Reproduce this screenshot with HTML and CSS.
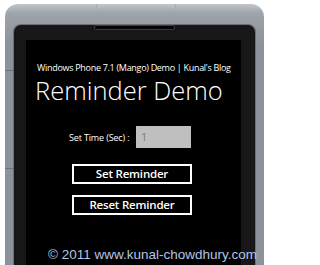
FILE: index.html
```html
<!DOCTYPE html>
<html>
<head>
<meta charset="utf-8">
<link rel="stylesheet" href="styles.css">
</head>
<body>
<div class="phone">
  <div class="bezel">
    <div class="speaker"></div>
    <div class="screen">
      <div class="subtitle">Windows Phone 7.1 (Mango) Demo | Kunal's Blog</div>
      <div class="title">Reminder Demo</div>
      <div class="row">
        <span class="label">Set Time (Sec) :</span>
        <span class="textbox">1</span>
      </div>
      <div class="buttons">
        <div class="btn">Set Reminder</div>
        <div class="btn">Reset Reminder</div>
      </div>
    </div>
  </div>
</div>
<div class="watermark">© 2011 www.kunal-chowdhury.com</div>
</body>
</html>
```
FILE: styles.css
```css
html, body {
  margin: 0;
  padding: 0;
  background: #ffffff;
  overflow: hidden;
  width: 270px;
  height: 265px;
}
body {
  position: relative;
  font-family: "Open Sans", "Noto Sans", sans-serif;
}
.phone {
  margin: 4px 0 0 5px;
  width: 259px;
  height: 261px;
  box-sizing: border-box;
  padding: 8px 9px 0 9px;
  border-radius: 13px 13px 0 0;
  background:
    linear-gradient(#6c737a, #6c737a) no-repeat 0 66px / 9px 1px,
    linear-gradient(#6c737a, #6c737a) no-repeat 0 164px / 9px 1px,
    linear-gradient(#a9aeb3, #a9aeb3) no-repeat 91px 0 / 1px 8px,
    linear-gradient(#a9aeb3, #a9aeb3) no-repeat 170px 0 / 1px 8px,
    linear-gradient(to bottom, #c2c6ca 0px, #9ea4aa 9px, #8b9299 40px, #8b9299 100%);
  overflow: hidden;
}
.bezel {
  height: 100%;
  box-sizing: border-box;
  padding: 0 14px 0 12px;
  background: #171717;
  border-radius: 7px 7px 0 0;
  box-shadow: 0 0 0 1px #6c7075;
}
.speaker {
  margin: 13px auto 0;
  position: relative;
  left: 1px;
  width: 79px;
  height: 3px;
  border-radius: 2px;
  background: #050505;
  border: 1px solid #3a3a3a;
  margin-bottom: 10px;
}
.screen {
  background: #000000;
  height: 225px;
  padding-top: 22px;
  box-sizing: border-box;
  color: #ffffff;
  overflow: hidden;
}
.subtitle {
  font-size: 9px;
  letter-spacing: -0.3px;
  line-height: 12px;
  padding-left: 11px;
  white-space: nowrap;
}
.title {
  font-size: 25.5px;
  font-weight: 300;
  line-height: 30px;
  margin-top: 1px;
  padding-left: 9px;
  white-space: nowrap;
}
.row {
  display: flex;
  align-items: center;
  margin-top: 21px;
  padding-left: 43px;
}
.label {
  font-size: 9px;
  letter-spacing: -0.15px;
  width: 67px;
  white-space: nowrap;
}
.textbox {
  width: 55px;
  height: 22px;
  box-sizing: border-box;
  background: #bfbfbf;
  color: #7a7a7a;
  font-size: 11px;
  line-height: 22px;
  padding-left: 5px;
}
.buttons {
  display: flex;
  flex-direction: column;
  gap: 11px;
  margin-top: 16px;
  padding-left: 46px;
}
.btn {
  width: 120px;
  height: 20px;
  box-sizing: border-box;
  border: 2px solid #ffffff;
  text-align: center;
  font-size: 11.5px;
  font-weight: 600;
  letter-spacing: -0.2px;
  line-height: 16px;
}
.watermark {
  position: absolute;
  left: 48px;
  top: 248px;
  font-family: "Liberation Sans", Arial, sans-serif;
  font-size: 13.5px;
  line-height: 13.5px;
  color: #b5c4e4;
  white-space: nowrap;
}
```
